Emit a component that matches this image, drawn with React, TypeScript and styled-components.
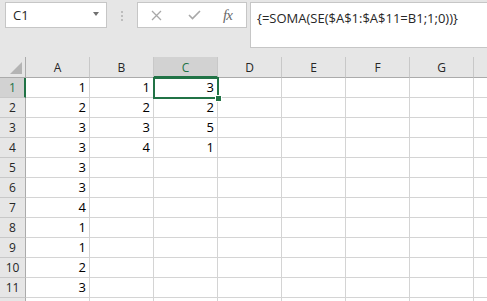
import styled, { createGlobalStyle } from "styled-components";

const GlobalStyle = createGlobalStyle`
  body {
    margin: 0;
    background: #e6e6e6;
    font-family: "Open Sans", "Noto Sans", sans-serif;
  }
`;

const GREEN = "#217346";

const Window = styled.div`
  width: 487px;
  height: 301px;
  overflow: hidden;
  background: #e6e6e6;
  display: flex;
  flex-direction: column;
`;

const FormulaArea = styled.div`
  height: 57px;
  flex: none;
  box-sizing: border-box;
  padding: 2px 0 0 5px;
  display: flex;
  align-items: flex-start;
`;

const NameBox = styled.div`
  width: 102px;
  height: 26px;
  box-sizing: border-box;
  border: 1px solid #c6c6c6;
  background: #fff;
  display: flex;
  align-items: center;
  justify-content: space-between;
  padding: 0 7px 0 7px;
  font-size: 13px;
  color: #262626;
`;

const DropArrow = styled.span`
  width: 0;
  height: 0;
  border-left: 3.5px solid transparent;
  border-right: 3.5px solid transparent;
  border-top: 4px solid #707070;
  margin-top: -2px;
`;

const Grip = styled.div`
  width: 2px;
  margin: 9px 14px 0 14px;
  display: flex;
  flex-direction: column;
  gap: 2px;

  span {
    width: 2px;
    height: 2px;
    background: #bdbdbd;
  }
`;

const FxButtons = styled.div`
  width: 110px;
  height: 26px;
  box-sizing: border-box;
  border: 1px solid #c6c6c6;
  background: #fff;
  display: flex;
  align-items: center;
  padding-left: 12px;
`;

const IconSlot = styled.span<{ $gap: number }>`
  display: flex;
  margin-left: ${(p) => p.$gap}px;
`;

const FxLabel = styled.span`
  font-family: "Liberation Serif", serif;
  font-style: italic;
  font-size: 15px;
  color: #6a6a6a;
  margin-left: 22px;
  letter-spacing: -1px;
`;

const FormulaInput = styled.div`
  flex: 1;
  margin-left: 3px;
  height: 46px;
  box-sizing: border-box;
  border: 1px solid #c6c6c6;
  border-right: none;
  background: #fff;
  padding: 6px 0 0 6px;
  font-size: 13px;
  color: #262626;
  white-space: nowrap;
`;

const Sheet = styled.div`
  display: grid;
  grid-template-columns: 26px repeat(8, 64px);
  grid-template-rows: 21px;
  grid-auto-rows: 20px;
  background: #fff;
  width: max-content;
`;

const Corner = styled.div`
  background: #e6e6e6;
  border-right: 1px solid #ababab;
  border-bottom: 1px solid #ababab;
  display: flex;
  align-items: flex-end;
  justify-content: flex-end;
  padding: 0 3px 3px 0;
  box-sizing: border-box;

  &::after {
    content: "";
    width: 0;
    height: 0;
    border-left: 12px solid transparent;
    border-bottom: 12px solid #b4b4b4;
  }
`;

const ColHeader = styled.div<{ $active?: boolean }>`
  background: ${(p) => (p.$active ? "#d2d2d2" : "#e6e6e6")};
  border-right: 1px solid #c8c8c8;
  border-bottom: ${(p) => (p.$active ? `2px solid ${GREEN}` : "1px solid #ababab")};
  box-sizing: border-box;
  display: flex;
  align-items: center;
  justify-content: center;
  padding-top: ${(p) => (p.$active ? "1px" : "0")};
  font-size: 12px;
  color: ${(p) => (p.$active ? GREEN : "#262626")};
`;

const RowHeader = styled.div<{ $active?: boolean }>`
  background: ${(p) => (p.$active ? "#d2d2d2" : "#e6e6e6")};
  border-right: ${(p) => (p.$active ? `2px solid ${GREEN}` : "1px solid #ababab")};
  border-bottom: 1px solid #c8c8c8;
  box-sizing: border-box;
  display: flex;
  align-items: center;
  justify-content: center;
  padding-left: ${(p) => (p.$active ? "1px" : "0")};
  font-size: 12px;
  color: ${(p) => (p.$active ? GREEN : "#262626")};
`;

const Cell = styled.div<{ $selected?: boolean }>`
  position: relative;
  border-right: 1px solid #d4d4d4;
  border-bottom: 1px solid #d4d4d4;
  box-sizing: border-box;
  display: flex;
  align-items: flex-end;
  justify-content: flex-end;
  padding: 0 3px 1px 0;
  font-size: 13px;
  line-height: 17px;
  color: #000;

  ${(p) =>
    p.$selected &&
    `
    &::after {
      content: "";
      position: absolute;
      left: -1px;
      top: -1px;
      right: -2px;
      bottom: -2px;
      border: 2px solid ${GREEN};
      z-index: 2;
    }
  `}
`;

const FillHandle = styled.span`
  position: absolute;
  right: -5px;
  bottom: -5px;
  width: 5px;
  height: 5px;
  background: ${GREEN};
  border: 1px solid #fff;
  z-index: 3;
`;

// last column runs past the window edge, so its letter is never seen
const columns = ["A", "B", "C", "D", "E", "F", "G", ""];
const data: (number | null)[][] = [
  [1, 1, 3],
  [2, 2, 2],
  [3, 3, 5],
  [3, 4, 1],
  [3],
  [3],
  [4],
  [1],
  [1],
  [2],
  [3],
];

function CrossIcon() {
  return (
    <svg width="11" height="11" viewBox="0 0 11 11">
      <path d="M1 1 L10 10 M10 1 L1 10" stroke="#a8a8a8" strokeWidth="1.3" fill="none" />
    </svg>
  );
}

function CheckIcon() {
  return (
    <svg width="13" height="10" viewBox="0 0 13 10">
      <path d="M1 5 L4.5 8.5 L12 1" stroke="#a8a8a8" strokeWidth="1.6" fill="none" />
    </svg>
  );
}

function SheetRow({ index, values, label }: { index: number; values: (number | null)[]; label: string }) {
  return (
    <>
      <RowHeader $active={index === 0}>{label}</RowHeader>
      {columns.map((c, ci) => {
        const selected = index === 0 && c === "C";
        return (
          <Cell key={ci} $selected={selected}>
            {values[ci] ?? ""}
            {selected && <FillHandle />}
          </Cell>
        );
      })}
    </>
  );
}

export default function App() {
  return (
    <Window>
      <GlobalStyle />
      <FormulaArea>
        <NameBox>
          C1
          <DropArrow />
        </NameBox>
        <Grip>
          <span />
          <span />
          <span />
        </Grip>
        <FxButtons>
          <IconSlot $gap={1}>
            <CrossIcon />
          </IconSlot>
          <IconSlot $gap={26}>
            <CheckIcon />
          </IconSlot>
          <FxLabel>fx</FxLabel>
        </FxButtons>
        <FormulaInput>{"{=SOMA(SE($A$1:$A$11=B1;1;0))}"}</FormulaInput>
      </FormulaArea>
      <Sheet>
        <Corner />
        {columns.map((c, ci) => (
          <ColHeader key={ci} $active={c === "C"}>
            {c}
          </ColHeader>
        ))}
        {data.map((row, r) => (
          <SheetRow key={r} index={r} values={row} label={String(r + 1)} />
        ))}
        {/* next row is cut by the window edge; only its strip shows */}
        <SheetRow index={11} values={[]} label="" />
      </Sheet>
    </Window>
  );
}
